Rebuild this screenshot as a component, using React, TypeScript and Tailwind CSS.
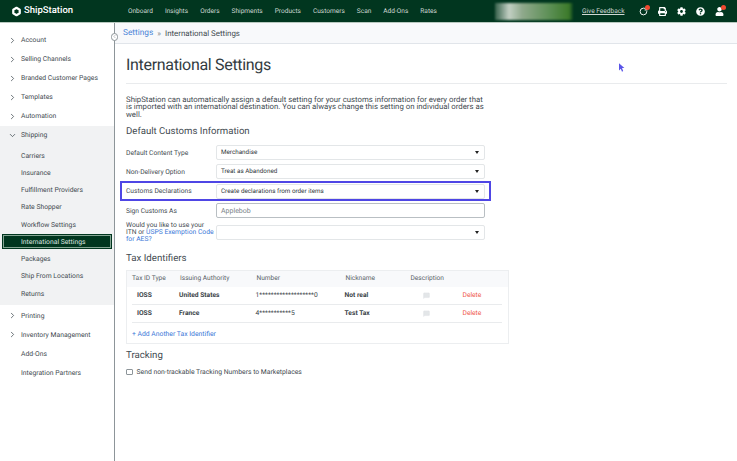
import { ChevronRight, ChevronDown, ChevronLeft, RotateCw, MessageSquare } from 'lucide-react';
import { FaPrint, FaCog, FaQuestionCircle, FaUser } from 'react-icons/fa';

const font = { fontFamily: 'Roboto, sans-serif' };

const topNav = ['Onboard', 'Insights', 'Orders', 'Shipments', 'Products', 'Customers', 'Scan', 'Add-Ons', 'Rates'];
const shippingItems = ['Carriers', 'Insurance', 'Fulfillment Providers', 'Rate Shopper', 'Workflow Settings', 'International Settings', 'Packages', 'Ship From Locations', 'Returns'];

const SideRow = ({ label, arrow = true, open = false }: { label: string; arrow?: boolean; open?: boolean }) => (
  <div className="flex h-[19.1px] items-center text-[6.8px] text-[#3f4a50]">
    <div className="flex w-[21px] justify-center pl-[4px]">
      {arrow && (open ? <ChevronDown className="h-[9px] w-[9px]" /> : <ChevronRight className="h-[9px] w-[9px]" />)}
    </div>
    {label}
  </div>
);

const Badge = () => <span className="absolute -right-[2px] -top-[2px] h-[5px] w-[5px] rounded-full bg-[#f0492f]" />;

const Caret = () => <span className="h-0 w-0 border-x-[2.5px] border-t-[3.5px] border-x-transparent border-t-[#222]" />;

const SelectBox = ({ value }: { value?: string }) => (
  <div className="flex h-[15px] w-[269px] items-center justify-between rounded-[2px] border border-[#e3e6e8] bg-white pl-[4px] pr-[5px] text-[6.3px] text-[#2f373c]">
    <span>{value}</span>
    <Caret />
  </div>
);

const TaxRow = ({ type, authority, number, nick }: { type: string; authority: string; number: string; nick: string }) => (
  <div className="ml-[5px] mr-[6px] flex h-[18px] items-center border-b border-[#e9ebed] text-[6.7px] text-[#3a4348]">
    <span className="ml-[5px] w-[42px] font-bold">{type}</span>
    <span className="w-[76.5px] font-bold">{authority}</span>
    <span className="w-[89px]">{number}</span>
    <span className="w-[65px] font-bold">{nick}</span>
    <span className="w-[51px] pl-[13px]">
      <MessageSquare className="h-[7px] w-[7px] fill-[#e3e6e8] text-[#e3e6e8]" />
    </span>
    <span className="pl-[2px] text-[#ef5a4c]">Delete</span>
  </div>
);

export default function App() {
  return (
    <div className="relative flex h-[461px] w-[737px] flex-col overflow-hidden bg-white [text-rendering:geometricPrecision]" style={font}>
      <header className="flex h-[23px] shrink-0 items-center border-b border-[#b9c9c0] bg-[#01361f] pt-[1px] text-[6.55px] text-[#cfd8d3]">
        <div className="flex w-[128px] items-center pl-[11px] text-[9.5px] font-medium text-white">
          <svg viewBox="0 0 24 24" className="mr-[2px] h-[11px] w-[11px]" fill="none" stroke="white" strokeWidth="5">
            <path d="M12 4l7 4v8l-7 4-7-4V8z" strokeLinejoin="round" />
          </svg>
          ShipStation
        </div>
        <nav className="flex gap-[12px]">
          {topNav.map((item) => (
            <span key={item}>{item}</span>
          ))}
        </nav>
        <div className="ml-auto h-[17px] w-[78px] bg-[linear-gradient(90deg,#35604a_0%,#c3d0c4_18%,#8fa98c_35%,#5c8f55_70%,#3c7a2a_95%,#0a4020_100%)] blur-[1px]" />
        <span className="ml-[9px] w-[44px] whitespace-nowrap underline">Give Feedback</span>
        <div className="ml-[13px] mr-[13px] flex items-center gap-[10px] text-white">
          <span className="relative"><RotateCw className="h-[9px] w-[9px]" strokeWidth={2.5} /><Badge /></span>
          <FaPrint className="h-[9px] w-[9px]" />
          <FaCog className="h-[9px] w-[9px]" />
          <FaQuestionCircle className="h-[9px] w-[9px]" />
          <span className="relative"><FaUser className="h-[9px] w-[9px]" /><Badge /></span>
        </div>
      </header>

      <div className="flex min-h-0 flex-1">
        <aside className="relative w-[115px] shrink-0 border-r border-[#8d9599] pt-[7.5px]">
          <SideRow label="Account" />
          <SideRow label="Selling Channels" />
          <SideRow label="Branded Customer Pages" />
          <SideRow label="Templates" />
          <SideRow label="Automation" />
          <div className="bg-[#f1f2f3] pb-[3px]">
            <SideRow label="Shipping" open />
            <div className="mt-[2px]">
              {shippingItems.map((item) =>
                item === 'International Settings' ? (
                  <div key={item} className="flex h-[17.25px] items-center px-[2px]">
                    <div className="h-[15px] flex-1 border border-[#01361f]">
                      <div className="flex h-full items-center border border-[#84a593] bg-[#01361f] pl-[17px] text-[6.8px] text-[#dfe6e2]">
                        {item}
                      </div>
                    </div>
                  </div>
                ) : (
                  <div key={item} className="flex h-[17.25px] items-center pl-[21px] text-[6.8px] text-[#3f4a50]">
                    {item}
                  </div>
                ),
              )}
            </div>
          </div>
          <div className="pt-[1px]">
            <SideRow label="Printing" />
            <SideRow label="Inventory Management" />
            <SideRow label="Add-Ons" arrow={false} />
            <SideRow label="Integration Partners" arrow={false} />
          </div>
          <div className="absolute -right-[4px] top-[10px] flex h-[7.5px] w-[7.5px] items-center justify-center rounded-full border border-[#8d9599] bg-white">
            <ChevronLeft className="h-[5px] w-[5px] text-[#6b7378]" />
          </div>
        </aside>

        <main className="min-w-0 flex-1">
          <div className="flex h-[21px] items-center border-b border-[#e1e5ea] bg-[#f8f9fb] pl-[8px] pt-[1px] text-[7.9px] text-[#3f4a50]">
            <span className="text-[8.3px] text-[#4a84d8]">Settings</span>
            <span className="mx-[4px] text-[#8d9599]">»</span>
            <span>International Settings</span>
          </div>

          <div className="pl-[11px] pr-[10px]">
            <h1 className="mt-[10px] border-b border-[#e9ebed] pb-[8px] text-[16px] leading-[21px] tracking-[-0.32px] text-[#333c41]">International Settings</h1>
            <p className="mt-[11.5px] w-[362px] text-[7.8px] leading-[7.6px] text-[#3f4a50]">
              ShipStation can automatically assign a default setting for your customs information for every order that is imported with an international destination. You can always change this setting on individual orders as well.
            </p>
            <h2 className="mt-[6.5px] text-[9.6px] leading-[13px] text-[#3f4a50]">Default Customs Information</h2>

            <div className="mt-[5.5px] flex h-[19px] items-center text-[6.7px] text-[#3f4a50]">
              <span className="w-[90px]">Default Content Type</span>
              <SelectBox value="Merchandise" />
            </div>
            <div className="flex h-[19px] items-center text-[6.7px] text-[#3f4a50]">
              <span className="w-[90px]">Non-Delivery Option</span>
              <SelectBox value="Treat as Abandoned" />
            </div>
            <div className="-ml-[6px] flex h-[20px] w-[371px] items-center border-2 border-[#4f46e5] pl-[4px] text-[6.7px] text-[#3f4a50]">
              <span className="w-[90px]">Customs Declarations</span>
              <SelectBox value="Create declarations from order items" />
            </div>
            <div className="flex h-[19px] items-center text-[6.7px] text-[#3f4a50]">
              <span className="w-[90px]">Sign Customs As</span>
              <div className="flex h-[15px] w-[269px] items-center rounded-[2px] border border-[#b9bfc3] pl-[4px] text-[7px] text-[#7a8388]">Applebob</div>
            </div>
            <div className="mt-[1px] flex h-[23px] items-center text-[6.75px] leading-[6.9px] text-[#3f4a50]">
              <span className="w-[90px]">
                Would you like to use your ITN or <span className="text-[#3b78d8]">USPS Exemption Code for AES?</span>
              </span>
              <SelectBox />
            </div>

            <h2 className="mt-[7.5px] text-[9.7px] leading-[13px] text-[#3f4a50]">Tax Identifiers</h2>
            <div className="mt-[5px] w-[383px] border border-[#eceef0]">
              <div className="flex h-[16px] items-center bg-[#f8f9fb] pl-[5px] text-[6.6px] text-[#586268]">
                <span className="w-[48px]">Tax ID Type</span>
                <span className="w-[76.5px]">Issuing Authority</span>
                <span className="w-[89px]">Number</span>
                <span className="w-[65px]">Nickname</span>
                <span>Description</span>
              </div>
              <TaxRow type="IOSS" authority="United States" number="1*******************0" nick="Not real" />
              <TaxRow type="IOSS" authority="France" number="4***********5" nick="Test Tax" />
              <div className="flex h-[20px] items-center pl-[5px] pt-[2px] text-[6.8px] text-[#3b78d8]">+ Add Another Tax Identifier</div>
            </div>

            <h2 className="mt-[5px] text-[9.7px] leading-[13px] text-[#3f4a50]">Tracking</h2>
            <label className="mt-[5px] flex items-center text-[6.8px] text-[#3f4a50]">
              <span className="mr-[4px] h-[6.5px] w-[6.5px] rounded-[1px] border border-[#8d9599]" />
              Send non-trackable Tracking Numbers to Marketplaces
            </label>
          </div>
        </main>
      </div>

      <svg viewBox="0 0 10 14" className="absolute left-[619px] top-[63px] h-[9px] w-[6px]" fill="#5a55e8">
        <path d="M0 0l9 8H5l2 5-2 1-2-5-3 3z" />
      </svg>
    </div>
  );
}
